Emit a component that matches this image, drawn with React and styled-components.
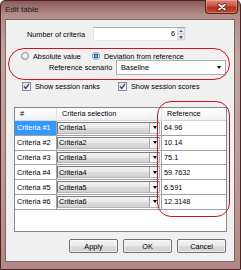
import styled, { createGlobalStyle } from "styled-components";

const GlobalStyle = createGlobalStyle`
  html, body {
    margin: 0;
    padding: 0;
    background: #fff;
  }
  body {
    font-family: "Liberation Sans", Arial, sans-serif;
    font-size: 7.3px;
    color: #000;
  }
`;

const rows = [
  { name: "Criteria #1", criteria: "Criteria1", value: "64.96" },
  { name: "Criteria #2", criteria: "Criteria2", value: "10.14" },
  { name: "Criteria #3", criteria: "Criteria3", value: "75.1" },
  { name: "Criteria #4", criteria: "Criteria4", value: "59.7632" },
  { name: "Criteria #5", criteria: "Criteria5", value: "6.591" },
  { name: "Criteria #6", criteria: "Criteria6", value: "12.3148" },
];

function App() {
  return (
    <>
      <GlobalStyle />
      <Window>
        <TitleBar>
          <Title>Edit table</Title>
          <CloseButton>
            <svg width="10" height="8" viewBox="0 0 10 8">
              <path d="M2 1.5 L8 6.5 M8 1.5 L2 6.5" stroke="#4a1a14" strokeWidth="3.2" strokeLinecap="round" />
              <path d="M2 1.5 L8 6.5 M8 1.5 L2 6.5" stroke="#fff" strokeWidth="1.7" strokeLinecap="round" />
            </svg>
          </CloseButton>
        </TitleBar>
        <Client>
          <CountRow>
            <CountLabel>Number of criteria</CountLabel>
            <Spin>
              <SpinValue>6</SpinValue>
              <SpinButtons>
                <SpinHalf><Caret $up $color="#4d6185" /></SpinHalf>
                <SpinHalf><Caret $color="#4d6185" /></SpinHalf>
              </SpinButtons>
            </Spin>
          </CountRow>

          <RadioRow>
            <RadioItem $width={71}>
              <Radio />
              <span>Absolute value</span>
            </RadioItem>
            <RadioItem>
              <Radio $checked />
              <span>Deviation from reference</span>
            </RadioItem>
          </RadioRow>
          <ScenarioRow>
            <ScenarioLabel>Reference scenario</ScenarioLabel>
            <Select>
              <span>Baseline</span>
              <Caret />
            </Select>
          </ScenarioRow>

          <CheckRow>
            <CheckItem $width={96}>
              <CheckBox />
              <span>Show session ranks</span>
            </CheckItem>
            <CheckItem>
              <CheckBox />
              <span>Show session scores</span>
            </CheckItem>
          </CheckRow>

          <Grid>
            <GridRow $header>
              <HeadCell>#</HeadCell>
              <HeadCell>Criteria selection</HeadCell>
              <HeadCell>Reference</HeadCell>
            </GridRow>
            {rows.map((r, i) => (
              <GridRow key={r.name}>
                <NameCell $selected={i === 0}>{r.name}</NameCell>
                <ComboCell>
                  <Combo>
                    <ComboText>{r.criteria}</ComboText>
                    <ComboDrop><Caret /></ComboDrop>
                  </Combo>
                </ComboCell>
                <ValueCell>{r.value}</ValueCell>
              </GridRow>
            ))}
          </Grid>

          <ButtonRow>
            <Button>Apply</Button>
            <Button>OK</Button>
            <Button>Cancel</Button>
          </ButtonRow>

          <Highlight $top={28} $left={2} $w={222} $h={32} $r={16} />
          <Highlight $top={81} $left={151} $w={73} $h={116} $r={14} />
        </Client>
      </Window>
    </>
  );
}

const Window = styled.div`
  width: 241px;
  height: 270px;
  box-sizing: border-box;
  display: flex;
  flex-direction: column;
  border: 1px solid #4b2523;
  border-radius: 5px 5px 0 0;
  background: linear-gradient(
    180deg,
    #8a5a56 0%,
    #b38c88 5%,
    #c3a5a3 20%,
    #bd9b99 60%,
    #b28885 100%
  );
`;

const TitleBar = styled.div`
  height: 18px;
  display: flex;
  justify-content: space-between;
  align-items: flex-start;
`;

const Title = styled.div`
  padding-left: 4px;
  line-height: 18px;
  font-size: 8px;
  color: #1a1a1a;
`;

const CloseButton = styled.div`
  margin: -1px 2px 0 0;
  width: 33px;
  height: 14px;
  box-sizing: border-box;
  display: flex;
  align-items: center;
  justify-content: center;
  border: 1px solid #5c2118;
  border-top: none;
  border-radius: 0 0 4px 4px;
  background: linear-gradient(180deg, #dc8a7c 0%, #c9563f 45%, #b3301c 55%, #c24a30 100%);
  box-shadow: inset 0 0 0 1px rgba(255, 200, 190, 0.35);
`;

const Client = styled.div`
  position: relative;
  flex: 1;
  margin: 0 5px 7px 4px;
  box-sizing: border-box;
  border: 1px solid #7c6564;
  background: #f0f0f0;
  display: flex;
  flex-direction: column;
`;

const CountRow = styled.div`
  margin: 7px 0 0 21px;
  height: 14px;
  display: flex;
  align-items: center;
`;

const CountLabel = styled.div`
  width: 66px;
`;

const Spin = styled.div`
  width: 93px;
  height: 14px;
  box-sizing: border-box;
  display: flex;
  border: 1px solid #abadb3;
  border-color: #abadb3 #e3e9ef #e3e9ef #e2e3ea;
  background: #fff;
`;

const SpinValue = styled.div`
  flex: 1;
  text-align: right;
  padding-right: 2px;
  line-height: 12px;
`;

const SpinButtons = styled.div`
  width: 8px;
  display: flex;
  flex-direction: column;
`;

const SpinHalf = styled.div`
  flex: 1;
  display: flex;
  align-items: center;
  justify-content: center;
  background: linear-gradient(180deg, #f3f3f3, #e2e4ea);
  border: 1px solid #d6d9e0;
`;

const Caret = styled.span`
  width: 0;
  height: 0;
  border-left: 2.5px solid transparent;
  border-right: 2.5px solid transparent;
  ${(p) =>
    p.$up
      ? `border-bottom: 2.5px solid ${p.$color || "#000"};`
      : `border-top: 3px solid ${p.$color || "#000"};`}
`;

const RadioRow = styled.div`
  margin: 10px 0 0 15px;
  height: 10px;
  display: flex;
  align-items: center;
`;

const RadioItem = styled.div`
  display: flex;
  align-items: center;
  gap: 4px;
  ${(p) => p.$width && `width: ${p.$width}px;`}
`;

const Radio = styled.span`
  width: 8px;
  height: 8px;
  box-sizing: border-box;
  border-radius: 50%;
  border: 1px solid #8f9092;
  background: ${(p) =>
    p.$checked
      ? "radial-gradient(circle at 50% 50%, #9ad4f5 0%, #2a7ab8 35%, #1d5b8e 50%, #e9ebee 58%, #f4f5f6 100%)"
      : "radial-gradient(circle at 50% 40%, #fff 0%, #e6e7e9 60%, #d3d4d6 100%)"};
`;

const ScenarioRow = styled.div`
  margin: -1px 0 0 43px;
  height: 15px;
  display: flex;
  align-items: center;
  gap: 5px;
`;

const ScenarioLabel = styled.div`
  width: 62px;
  text-align: right;
  white-space: nowrap;
`;

const Select = styled.div`
  width: 110px;
  height: 15px;
  box-sizing: border-box;
  display: flex;
  align-items: center;
  justify-content: space-between;
  padding: 0 4px;
  border: 1px solid #abadb3;
  background: #fff;
`;

const CheckRow = styled.div`
  margin: 7px 0 0 16px;
  height: 9px;
  display: flex;
  align-items: center;
`;

const CheckItem = styled.div`
  display: flex;
  align-items: center;
  gap: 4px;
  ${(p) => p.$width && `width: ${p.$width}px;`}
`;

const CheckBox = styled.span`
  width: 9px;
  height: 9px;
  box-sizing: border-box;
  border: 1px solid #8e8f8f;
  background:
    url("data:image/svg+xml,%3Csvg xmlns='http://www.w3.org/2000/svg' width='7' height='7'%3E%3Cpath d='M1 3.5 L2.8 5.5 L6 1' fill='none' stroke='%23384d87' stroke-width='1.4'/%3E%3C/svg%3E") center / 7px 7px no-repeat,
    linear-gradient(135deg, #d9dbe0, #fbfbfc);
`;

const Grid = styled.div`
  margin: 16px 0 0 8px;
  width: 213px;
  height: 125px;
  box-sizing: border-box;
  border: 1px solid #828790;
  background: #fff;
`;

const GridRow = styled.div`
  display: grid;
  grid-template-columns: 42px 105px 64px;
  height: ${(p) => (p.$header ? "13px" : "14.8px")};
`;

const HeadCell = styled.div`
  padding-left: 5px;
  line-height: 12px;
  white-space: nowrap;
  border-right: 1px solid #e2e3e6;
  border-bottom: 1px solid #d5d5d5;
  background: linear-gradient(180deg, #ffffff, #f6f7f9 60%, #f0f1f3);
  &:last-child {
    border-right: none;
  }
`;

const BodyCell = styled.div`
  box-sizing: border-box;
  border-right: 1px solid #a0a0a0;
  border-bottom: 1px solid #a0a0a0;
  display: flex;
  align-items: center;
  overflow: hidden;
  white-space: nowrap;
`;

const NameCell = styled(BodyCell)`
  padding-left: 2px;
  background: ${(p) => (p.$selected ? "#3399ff" : "#fff")};
  color: ${(p) => (p.$selected ? "#fff" : "#000")};
`;

const ComboCell = styled(BodyCell)`
  padding: 1px 1px 1px 0;
  align-items: stretch;
`;

const Combo = styled.div`
  flex: 1;
  display: flex;
  border: 1px solid #8a8a8a;
  border-color: #7a7a7a #b5b5b5 #b5b5b5 #7a7a7a;
  background: linear-gradient(180deg, #f2f2f2 0%, #e9e9e9 50%, #dcdcdc 51%, #d2d2d2 100%);
`;

const ComboText = styled.div`
  flex: 1;
  padding-left: 1px;
  display: flex;
  align-items: center;
`;

const ComboDrop = styled.div`
  width: 9px;
  display: flex;
  align-items: center;
  justify-content: center;
  border-left: 1px solid #a8a8a8;
  background: #f4f4f4;
`;

const ValueCell = styled(BodyCell)`
  padding-left: 2px;
  border-right: none;
`;

const ButtonRow = styled.div`
  margin-top: 7px;
  padding-right: 8px;
  display: flex;
  justify-content: flex-end;
  gap: 5px;
`;

const Button = styled.div`
  width: 49px;
  height: 14px;
  box-sizing: border-box;
  border: 1px solid #707070;
  border-radius: 2px;
  background: linear-gradient(180deg, #f2f2f2 0%, #ebebeb 50%, #dddddd 51%, #cfcfcf 100%);
  box-shadow: inset 0 0 0 1px rgba(255, 255, 255, 0.6);
  display: flex;
  align-items: center;
  justify-content: center;
`;

const Highlight = styled.div`
  position: absolute;
  top: ${(p) => p.$top}px;
  left: ${(p) => p.$left}px;
  width: ${(p) => p.$w}px;
  height: ${(p) => p.$h}px;
  box-sizing: border-box;
  border: 1.5px solid #c8151f;
  border-radius: ${(p) => p.$r}px;
  pointer-events: none;
`;

export default App;
